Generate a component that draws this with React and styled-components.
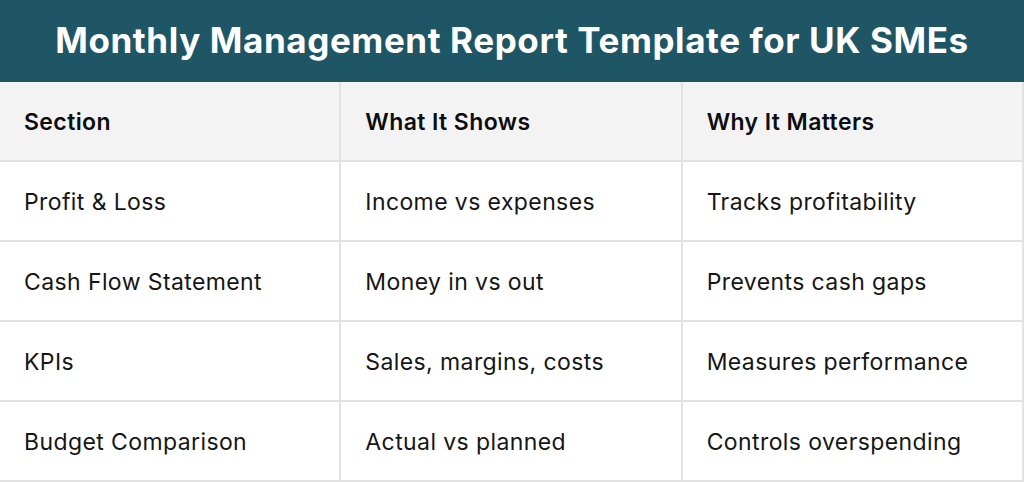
import React from 'react'
import styled, { createGlobalStyle } from 'styled-components'

const GlobalStyle = createGlobalStyle`
  html, body {
    margin: 0;
    padding: 0;
    background: #ffffff;
  }
  * {
    box-sizing: border-box;
  }
`

const Page = styled.div`
  width: 1024px;
  height: 482px;
  overflow: hidden;
  font-family: Inter, "Liberation Sans", sans-serif;
`

const Banner = styled.h1`
  margin: 0;
  height: 82px;
  background: #1f5665;
  color: #ffffff;
  display: flex;
  align-items: center;
  justify-content: center;
  font-size: 35px;
  font-weight: 700;
  letter-spacing: 0.6px;
  padding-bottom: 3px;
`

const Grid = styled.div`
  display: grid;
  grid-template-columns: repeat(3, 1fr);
`

const Cell = styled.div`
  height: 80px;
  display: flex;
  align-items: center;
  padding: 2px 24px 0;
  border-right: 2px solid #e2e2e2;
  border-bottom: 2px solid #e2e2e2;
  background: ${p => (p.$head ? '#f3f3f3' : '#ffffff')};
  color: ${p => (p.$head ? '#0d0d0d' : '#161616')};
  font-size: 23px;
  letter-spacing: 0.4px;
  font-weight: ${p => (p.$head ? 600 : 400)};
`

const headers = ['Section', 'What It Shows', 'Why It Matters']

const rows = [
  ['Profit & Loss', 'Income vs expenses', 'Tracks profitability'],
  ['Cash Flow Statement', 'Money in vs out', 'Prevents cash gaps'],
  ['KPIs', 'Sales, margins, costs', 'Measures performance'],
  ['Budget Comparison', 'Actual vs planned', 'Controls overspending']
]

export default function App() {
  return <>
    <GlobalStyle />
    <Page>
      <Banner>Monthly Management Report Template for UK SMEs</Banner>
      <Grid>
        {headers.map(h => <Cell key={h} $head>{h}</Cell>)}
        {rows.map(row => row.map((text, i) =>
          <Cell key={row[0] + i}>{text}</Cell>
        ))}
      </Grid>
    </Page>
  </>
}
